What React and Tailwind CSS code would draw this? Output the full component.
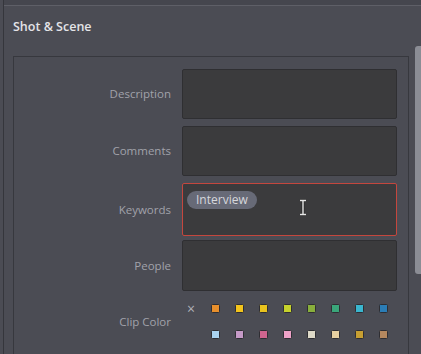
export default function App() {
  const rows = [
    { label: "Description", box: "h-[50px] mt-0" },
    { label: "Comments", box: "h-[50px] mt-[7px]" },
    { label: "Keywords", box: "h-[53px] mt-[7px]" },
    { label: "People", box: "h-[51px] mt-[4px]" },
  ];
  const topColors = ["#e88f2c", "#f3c41c", "#e9c31e", "#c6d22c", "#88ae3c", "#3aa67a", "#3ab6cf", "#2b7db6"];
  const bottomColors = ["#a9d3f0", "#c59ac7", "#d0658f", "#eea2c8", "#dedac8", "#e6cfa0", "#c79f32", "#b5885f"];

  return (
    <div
      className="w-[421px] h-[354px] overflow-hidden bg-[#4b4c54] pl-[3px] flex"
      style={{ fontFamily: '"Open Sans", "Noto Sans", sans-serif' }}
    >
      <div className="flex-1 flex flex-col border-l border-[#35363c]">
        {/* top strip */}
        <div className="h-[6px] shrink-0 bg-[#45464e] border-b border-[#5e5f67]" />

        <div className="flex flex-1">
          {/* main column */}
          <div className="flex flex-col w-[405px]">
            <div className="h-[50px] pl-[9px] pt-[7px]">
              <span className="text-[12.5px] font-semibold text-[#e4e4e8] leading-[18px]">
                Shot &amp; Scene
              </span>
            </div>

            <div className="ml-[9px] w-[396px] flex-1 border-l border-t border-r border-[#37383e] pt-[12px]">
              <div className="flex flex-col">
                {rows.map(({ label, box }) => (
                  <div key={label} className={"flex items-center " + box}>
                    <div className="w-[157px] text-right text-[11.5px] text-[#a1a2aa]">{label}</div>
                    <div
                      className={
                        label === "Keywords"
                          ? "ml-[11px] w-[215px] h-full bg-[#3b3b3d] border-[1.5px] border-[#c4473e] rounded-[2px] relative"
                          : "ml-[11px] w-[215px] h-full bg-[#3b3b3d] border border-[#2f2f32] rounded-[2px]"
                      }
                    >
                      {label === "Keywords" && (
                        <>
                          <div className="mt-[7px] ml-[4px] inline-flex items-center h-[18px] px-[9px] rounded-full bg-[#676a77] text-[12px] text-[#d6d7dc]">
                            Interview
                          </div>
                          <svg
                            className="absolute left-[116px] top-[15px]"
                            width="8"
                            height="17"
                            viewBox="0 0 8 17"
                          >
                            <path
                              d="M1 1.5h6M1 15.5h6M4 1.5v14"
                              stroke="#2a2a2a"
                              strokeWidth="3"
                              fill="none"
                            />
                            <path
                              d="M1 1.5h6M1 15.5h6M4 1.5v14"
                              stroke="#e6e6e6"
                              strokeWidth="1.4"
                              fill="none"
                            />
                          </svg>
                        </>
                      )}
                    </div>
                  </div>
                ))}

                <div className="flex items-center mt-[13px]">
                  <div className="w-[157px] text-right text-[11.5px] text-[#a1a2aa]">Clip Color</div>
                  <div className="ml-[8px] grid grid-cols-9 w-[216px] gap-y-[17px]">
                    <div className="h-[9px] flex items-center justify-center text-[14px] leading-none text-[#b0b1b8]">
                      ×
                    </div>
                    {topColors.map((c) => (
                      <div key={c} className="h-[9px] flex justify-center">
                        <div
                          className="w-[9px] h-[9px] rounded-[1.5px] border border-[#2e2e33]"
                          style={{ backgroundColor: c }}
                        />
                      </div>
                    ))}
                    <div />
                    {bottomColors.map((c) => (
                      <div key={c} className="h-[9px] flex justify-center">
                        <div
                          className="w-[9px] h-[9px] rounded-[1.5px] border border-[#2e2e33]"
                          style={{ backgroundColor: c }}
                        />
                      </div>
                    ))}
                  </div>
                </div>
              </div>
            </div>
          </div>

          {/* scrollbar */}
          <div className="flex-1 pl-[6px] pt-[40px]">
            <div className="h-[228px] bg-[#8b8d95] rounded-l-[3px]" />
          </div>
        </div>
      </div>
    </div>
  );
}
